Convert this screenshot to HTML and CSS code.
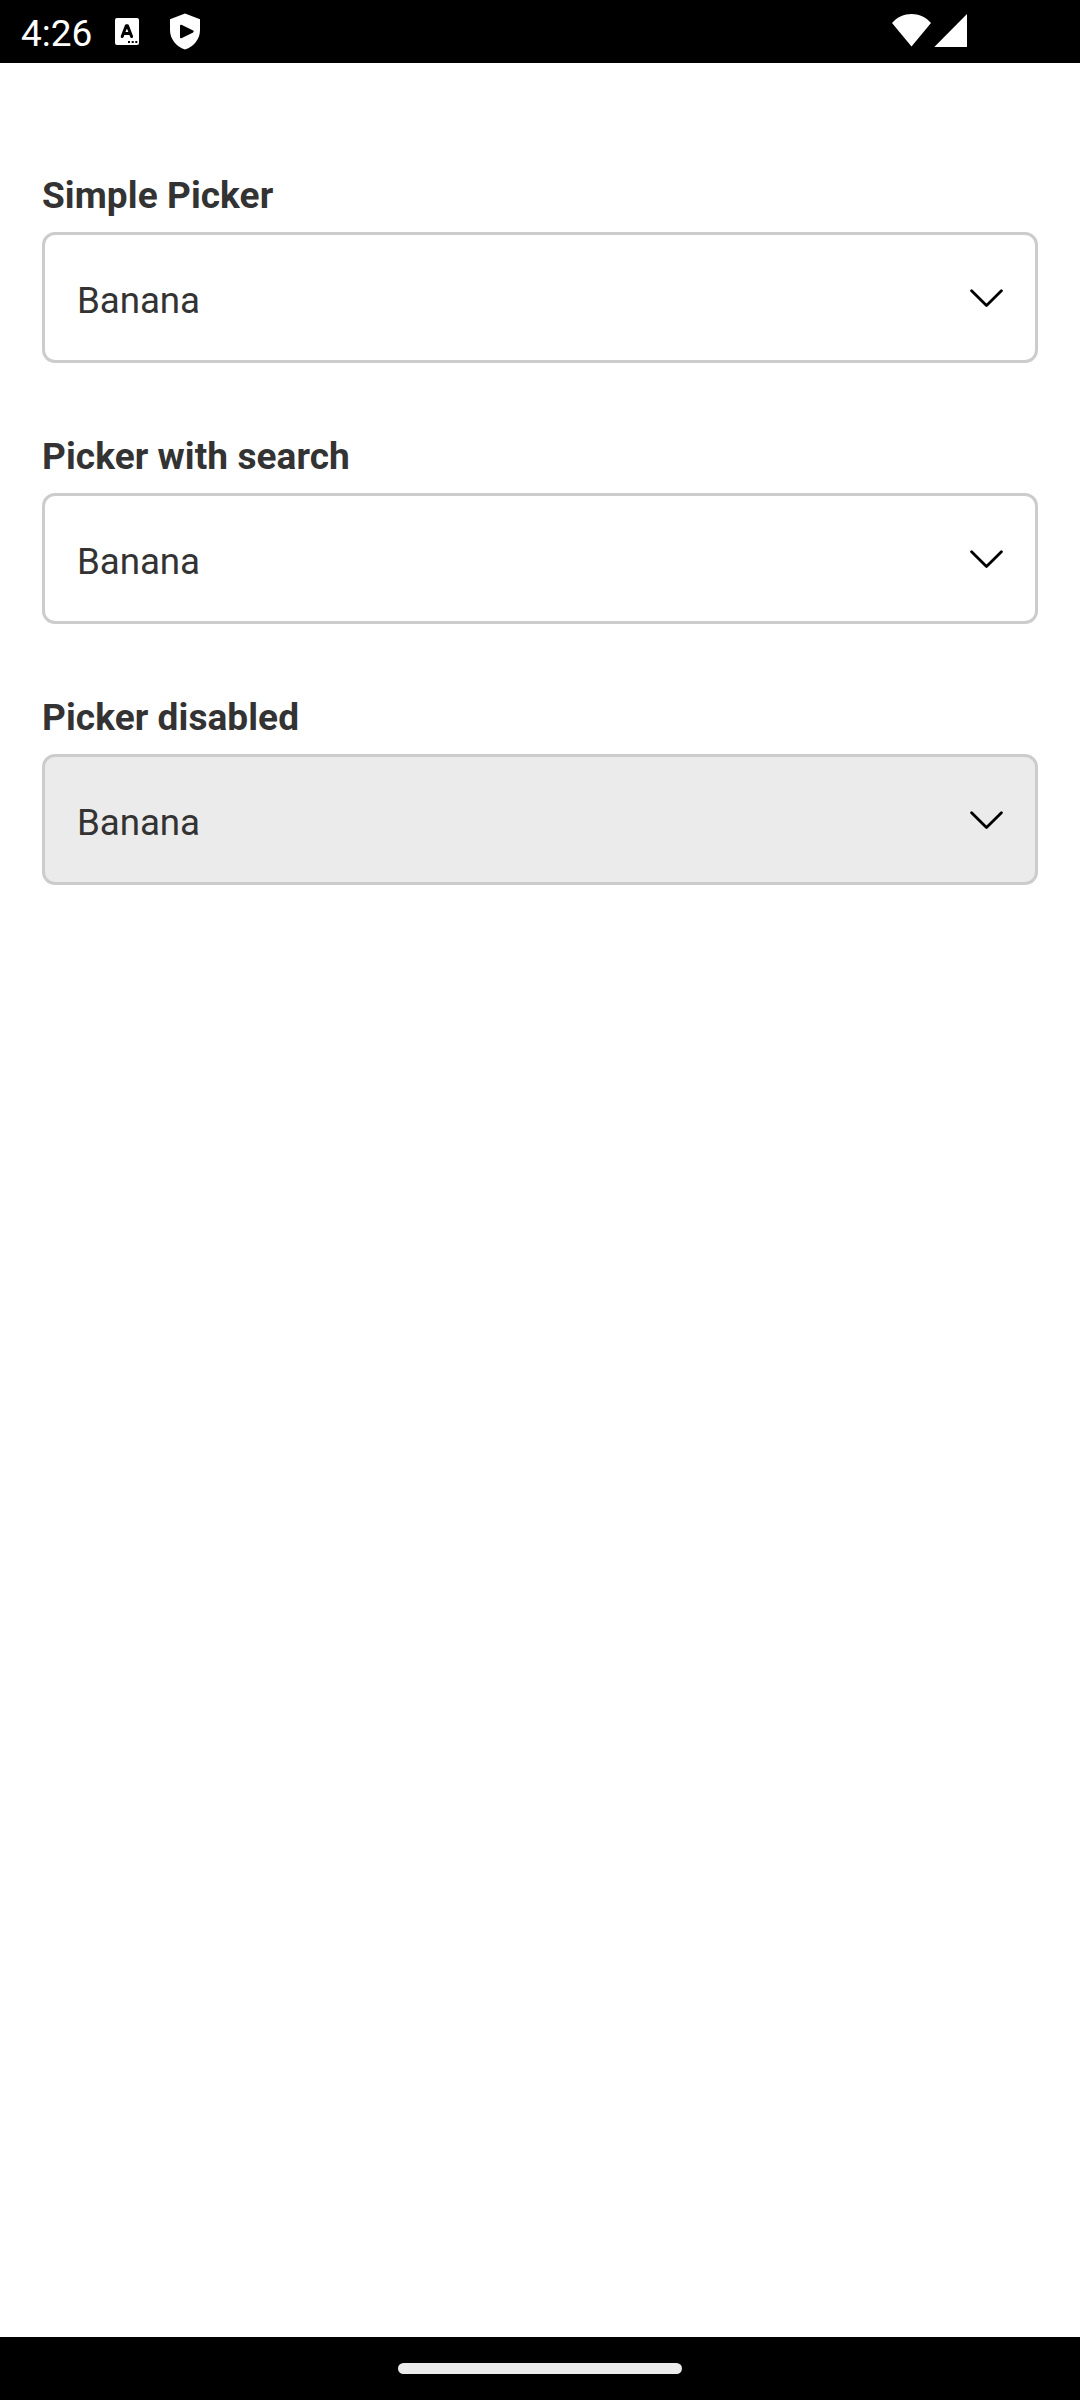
FILE: index.html
```html
<!DOCTYPE html>
<html lang="en">
<head>
<meta charset="utf-8">
<title>Picker</title>
<link rel="stylesheet" href="styles.css">
</head>
<body>
<header class="status">
  <span class="time">4:26</span>
  <svg class="badge" width="24" height="27" viewBox="0 0 24 27"><rect width="24" height="27" rx="2" fill="#fff"/><path d="M7.200 18.500 11.300 7.700h1.200l4.100 10.800M8.500 15.500h6.800" fill="none" stroke="#000" stroke-width="3" stroke-linecap="round" stroke-linejoin="round"/><path d="M13 24h2m1.700 0h2m1.600 0h2" stroke="#000" stroke-width="2"/></svg>
  <svg class="shield" width="30" height="37" viewBox="0 0 30 37"><path d="M15 0.500 30 6.200V17c0 9-6 16.500-15 19.500C6 33.500 0 26 0 17V6.200z" fill="#fff"/><path d="M11 12.700v11.600l11.700-5.800z" fill="#000" stroke="#000" stroke-width="2" stroke-linejoin="round"/></svg>
  <svg class="signal" width="75" height="33" viewBox="0 0 75 33"><path d="M0 9C10-3 29-3 39 9L19.500 32.500z" fill="#fff"/><path d="M75 0v33H42.300z" fill="#fff"/></svg>
</header>
<main class="content">
  <section class="field"><h2 class="label">Simple Picker</h2><div class="picker"><span class="value">Banana</span><svg class="chevron" width="33" height="19" viewBox="0 0 33 19"><path d="M1.600 2.800 16.500 17.500 31.400 2.800"/></svg></div></section>
  <section class="field"><h2 class="label">Picker with search</h2><div class="picker"><span class="value">Banana</span><svg class="chevron" width="33" height="19" viewBox="0 0 33 19"><path d="M1.600 2.800 16.500 17.500 31.400 2.800"/></svg></div></section>
  <section class="field"><h2 class="label">Picker disabled</h2><div class="picker disabled"><span class="value">Banana</span><svg class="chevron" width="33" height="19" viewBox="0 0 33 19"><path d="M1.600 2.800 16.500 17.500 31.400 2.800"/></svg></div></section>
</main>
<footer class="navbar"><div class="handle"></div></footer>
</body>
</html>
```
FILE: styles.css
```css
* { box-sizing: border-box; }
body { margin: 0; width: 1080px; height: 2400px; display: flex; flex-direction: column; background: #fff; color: #333; font-family: Roboto, sans-serif; }
.status { height: 63px; background: #000; color: #fff; display: flex; align-items: center; padding: 0 113px 0 21px; }
.time { width: 94px; padding-top: 4px; font-size: 37px; line-height: 59px; }
.shield { margin-left: 31px; }
.signal { margin: 0 0 2px auto; }
.content { flex: 1; padding: 109px 42px 0; }
.field { height: 261px; }
.label { margin: 0; height: 60px; font-size: 37px; line-height: 47px; font-weight: 700; letter-spacing: 0.08px; }
.picker { height: 131px; border: 3px solid #ccc; border-radius: 13px; padding: 0 32px; display: flex; align-items: center; justify-content: space-between; }
.value { padding-top: 5px; font-size: 36.75px; letter-spacing: -0.1px; }
.disabled { background: #ebebeb; }
.chevron { fill: none; stroke: #000; stroke-width: 2.8; stroke-linecap: round; stroke-linejoin: round; }
.navbar { height: 63px; background: #000; display: flex; align-items: center; justify-content: center; }
.handle { width: 284px; height: 11px; border-radius: 6px; background: #ebebeb; }
```
